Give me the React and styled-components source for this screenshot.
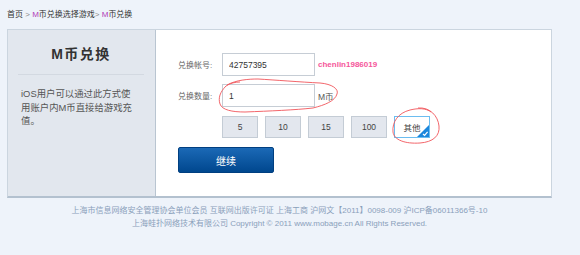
import React from 'react'
import styled, { createGlobalStyle } from 'styled-components'

const GlobalStyle = createGlobalStyle`
  html, body {
    margin: 0;
    padding: 0;
    background: #eef3fa;
    font-family: 'Liberation Sans', 'Noto Sans CJK SC', sans-serif;
    color: #333;
  }
`

const amounts = ['5', '10', '15', '100']

const App = () => {
  return (
    <>
      <GlobalStyle />
      <Page>
        {/* Breadcrumb */}
        <Crumbs>
          <span>首页</span>
          <Sep> &gt; </Sep>
          <Pink>M</Pink>
          <span>币兑换选择游戏</span>
          <Sep>&gt; </Sep>
          <Pink>M</Pink>
          <span>币兑换</span>
        </Crumbs>
        {/* Main box */}
        <Box>
          <Side>
            <SideTitle>M币兑换</SideTitle>
            <SideText>
              iOS用户可以通过此方式使用账户内M币直接给游戏充值。
            </SideText>
          </Side>
          <Main>
            <Row>
              <Label>兑换帐号:</Label>
              <Input readOnly value='42757395' />
              <UserName>chenlin1986019</UserName>
            </Row>
            <Row>
              <Label>兑换数量:</Label>
              <Input readOnly value='1' />
              <Unit>M币</Unit>
            </Row>
            <Amounts>
              {amounts.map((item) => {
                return <Amount key={item}>{item}</Amount>
              })}
              <Amount $active>
                其他
                <Corner viewBox='0 0 12 12'>
                  <polygon points='12,0 12,12 0,12' fill='#1a86dc' />
                  <path
                    d='M6 9 L7.6 10.4 L10.6 6.8'
                    stroke='#fff'
                    strokeWidth='1.2'
                    fill='none'
                  />
                </Corner>
              </Amount>
            </Amounts>
            <Submit>继续</Submit>
            {/* hand drawn marks */}
            <Marks viewBox='0 0 396 166'>
              <g transform='translate(-156,-30)'>
                <path
                  d='M227 85 C236 80 248 79 258 79 C275 80 300 82 320 83 C332 84 339 89 337 94 C335 101 325 105 313 108 C295 110 270 111 245 112 C232 112 222 110 220 104 C218 98 220 92 226 86 C230 83 236 82 240 82'
                />
                <path
                  d='M418 108 C430 107 438 116 439 126 C440 136 433 142 420 143 C405 144 394 140 393 132 C392 122 398 113 410 110 C418 108 426 108 431 112'
                />
              </g>
            </Marks>
          </Main>
        </Box>
        {/* Footer */}
        <Footer>
          <p>
            上海市信息网络安全管理协会单位会员 互联网出版许可证 上海工商
            沪网文【2011】0098-009 沪ICP备06011366号-10
          </p>
          <p>
            上海蛙扑网络技术有限公司 Copyright © 2011 www.mobage.cn All Rights
            Reserved.
          </p>
        </Footer>
      </Page>
    </>
  )
}

const Page = styled.div`
  width: 545px;
  margin-left: 7px;
`

const Crumbs = styled.div`
  height: 29px;
  line-height: 29px;
  font-size: 8px;
  color: #333;
  white-space: pre;
`

const Sep = styled.span`
  color: #888;
`

const Pink = styled.span`
  color: #b13bb8;
`

const Box = styled.div`
  display: flex;
  height: 166px;
  border: 1px solid #cbd5df;
  border-bottom: 2px solid #b3c1cf;
  box-sizing: content-box;
`

const Side = styled.div`
  width: 147px;
  background: #e2e7ee;
  padding: 0 11px 0 10px;
  box-sizing: border-box;
`

const SideTitle = styled.h2`
  margin: 0;
  padding: 13px 0 11px;
  font-size: 14px;
  font-weight: bold;
  letter-spacing: 1.5px;
  text-align: center;
  color: #333;
  border-bottom: 1px solid #d3d9e1;
`

const SideText = styled.p`
  margin: 12px 11px 0 3px;
  font-size: 9.4px;
  line-height: 13.5px;
  color: #555;
`

const Main = styled.div`
  flex: 1;
  position: relative;
  background: #fff;
  border-left: 1px solid #b9c5d1;
  padding: 23px 0 0 22px;
`

const Row = styled.div`
  display: flex;
  align-items: center;
  margin-bottom: 8px;
`

const Label = styled.span`
  width: 44px;
  font-size: 8px;
  color: #666;
`

const Input = styled.input`
  width: 93px;
  height: 23px;
  box-sizing: border-box;
  border: 1px solid #c6cdd5;
  padding: 0 6px;
  font-family: inherit;
  font-size: 8.5px;
  color: #333;
  outline: none;
`

const UserName = styled.span`
  margin-left: 3px;
  font-size: 8px;
  font-weight: bold;
  color: #f5569a;
`

const Unit = styled.span`
  margin-left: 3px;
  font-size: 8.5px;
  color: #555;
`

const Amounts = styled.div`
  display: flex;
  gap: 7px;
  margin: 9px 0 9px 44px;
`

const Amount = styled.div`
  position: relative;
  width: 36px;
  height: 22px;
  box-sizing: border-box;
  display: flex;
  align-items: center;
  justify-content: center;
  font-size: 8.5px;
  color: #444;
  background: ${(p) => (p.$active ? '#fff' : '#e3e7ee')};
  border: 1px solid ${(p) => (p.$active ? '#6cbdf0' : '#c4ccd5')};
  overflow: hidden;
`

const Corner = styled.svg`
  position: absolute;
  right: 0;
  bottom: 0;
  width: 12px;
  height: 12px;
`

const Submit = styled.button`
  width: 96px;
  height: 26px;
  border: 1px solid #003f80;
  border-radius: 2px;
  background: linear-gradient(#1b69b6, #00478e);
  color: #fff;
  font-family: inherit;
  font-size: 10px;
  cursor: pointer;
`

const Marks = styled.svg`
  position: absolute;
  left: 0;
  top: 0;
  width: 396px;
  height: 166px;
  pointer-events: none;
  path {
    fill: none;
    stroke: #f0555a;
    stroke-width: 0.9;
  }
`

const Footer = styled.div`
  padding-top: 6px;
  text-align: center;
  font-size: 8px;
  line-height: 13px;
  color: #8aa0bb;
  p {
    margin: 0;
  }
`

export default App
